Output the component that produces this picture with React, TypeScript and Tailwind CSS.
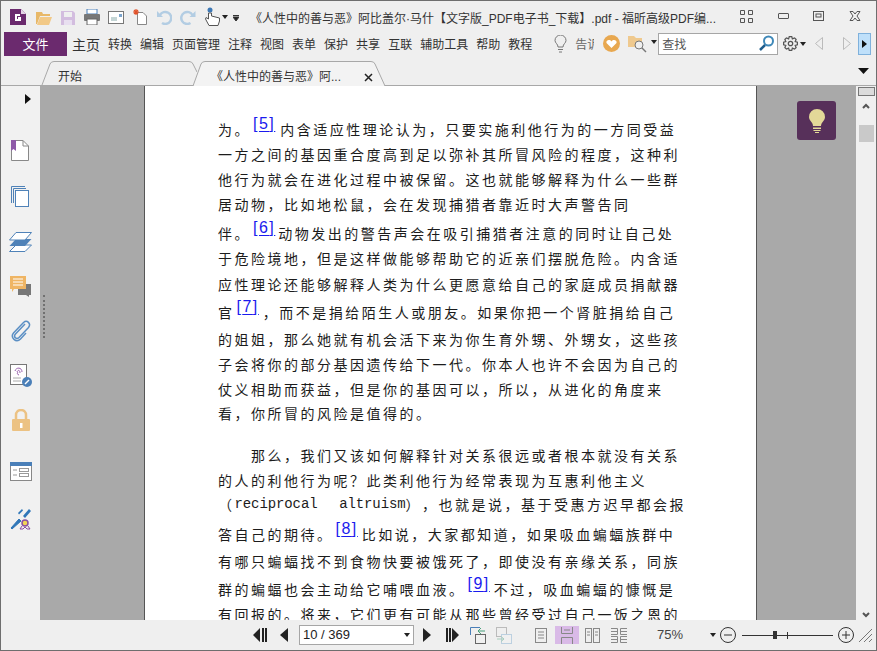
import { ReactNode } from 'react';

const menuItems = ['转换', '编辑', '页面管理', '注释', '视图', '表单', '保护', '共享', '互联', '辅助工具', '帮助', '教程'];

function Ref({ n, className = 'mr-[4px]' }: { n: number; className?: string }) {
  return (
    <a className={`${className} relative -top-[5px] ml-[2px] font-['Liberation_Sans',sans-serif] text-[16px] tracking-[1.5px] text-[#1a1aee] underline underline-offset-2`}>[{n}]</a>
  );
}

function Line({ mt, children }: { mt: string; children: ReactNode }) {
  return <div className={`${mt} flex h-[20px] items-center whitespace-nowrap`}>{children}</div>;
}

function Tri({ dir = 'r', className }: { dir?: 'r' | 'l'; className?: string }) {
  return (
    <svg width="8" height="14" viewBox="0 0 8 14" className={className}>
      <path d={dir === 'r' ? 'M0 0L8 7L0 14Z' : 'M8 0L0 7L8 14Z'} fill="#222" />
    </svg>
  );
}

function Caret({ className }: { className?: string }) {
  return (
    <svg width="6" height="4" viewBox="0 0 6 4" className={className}>
      <path d="M0 0H6L3 4Z" fill="#222" />
    </svg>
  );
}

export default function App() {
  return (
    <div className="flex h-[651px] w-[877px] flex-col overflow-hidden border border-[#6e6e6e] bg-[#efefef] font-['Liberation_Sans','Noto_Sans_CJK_SC',sans-serif] text-[12px] text-[#333]">
      {/* title bar */}
      <div className="flex h-[30px] shrink-0 items-center">
        <svg width="16" height="16" viewBox="0 0 16 16" className="ml-[9px] mt-[2px]">
          <path d="M0 0H11L16 5V16H0Z" fill="#6b2a6e" />
          <path d="M11 0L16 5H11Z" fill="#e4d4e6" />
          <path d="M10 6H6V11H10V9H8" fill="none" stroke="#fff" strokeWidth="2" />
        </svg>
        <svg width="16" height="14" viewBox="0 0 16 14" className="ml-[10px] mt-[3px]">
          <path d="M0 2V1H6L7 3H14V5H4L1 13H0Z" fill="#e8b868" />
          <path d="M4 6H16L13 14H1Z" fill="#f2c987" />
        </svg>
        <svg width="14" height="14" viewBox="0 0 14 14" className="ml-[9px] mt-[3px]">
          <path d="M0 0H12L14 2V14H0Z" fill="#d3bddf" />
          <rect x="3" y="1" width="8" height="5" fill="#efefef" />
          <rect x="3" y="9" width="8" height="5" fill="#e8dff0" />
        </svg>
        <svg width="16" height="16" viewBox="0 0 16 16" className="ml-[9px] mt-[2px]">
          <rect x="3" y="0" width="10" height="5" fill="#fff" stroke="#4a7fb8" />
          <rect x="0" y="5" width="16" height="7" rx="1" fill="#777" />
          <rect x="3" y="10" width="10" height="6" fill="#fff" stroke="#666" />
        </svg>
        <svg width="16" height="13" viewBox="0 0 16 13" className="ml-[8px] mt-[3px]">
          <rect x=".5" y=".5" width="15" height="12" fill="#fff" stroke="#777" />
          <path d="M3 7H9M3 9H9" stroke="#8aa" />
          <rect x="11" y="3" width="3" height="3" fill="#7aa3cc" />
        </svg>
        <svg width="14" height="16" viewBox="0 0 14 16" className="ml-[9px] mt-[2px]">
          <path d="M4.500 3.500H10L13.500 7V15.500H4.500Z" fill="#fff" stroke="#888" />
          <path d="M3 0V6M0 3H6M1 1L5 5M5 1L1 5" stroke="#e0522a" strokeWidth="1.200" />
        </svg>
        <svg width="15" height="15" viewBox="0 0 15 15" fill="none" className="ml-[10px] mt-[3px]">
          <path d="M3 5A6 6 0 1 1 5 13" stroke="#b3cde3" strokeWidth="2.500" />
          <path d="M0 1V7H6Z" fill="#b3cde3" />
        </svg>
        <svg width="16" height="15" viewBox="0 0 15 15" fill="none" className="ml-[8px] mt-[3px]">
          <path d="M12 5A6 6 0 1 0 10 13" stroke="#b3cde3" strokeWidth="2.500" />
          <path d="M15 1V7H9Z" fill="#b3cde3" />
        </svg>
        <svg width="15" height="20" viewBox="0 0 15 20" className="ml-[9px] mt-[2px]">
          <circle cx="5" cy="3" r="2.500" fill="#3d78b5" />
          <path d="M3.500 6V12L1 10.500L0.500 12L4 18.500H13L14.500 14V11L6.500 9V6Z" fill="#fff" stroke="#555" />
        </svg>
        <Caret className="ml-[2px] mt-[2px]" />
        <svg width="6" height="6" viewBox="0 0 6 6" className="ml-[5px] mt-[3px]">
          <path d="M0 .5H6M0 2H6L3 6Z" stroke="#333" fill="#222" strokeWidth="1" />
        </svg>
        <span className="ml-[11px] mt-[6px] w-[466px] whitespace-nowrap text-[12px] text-[#333]">《人性中的善与恶》阿比盖尔·马什【文字版_PDF电子书_下载】.pdf - 福昕高级PDF编...</span>
        <svg width="13" height="13" viewBox="0 0 13 13" fill="none" stroke="#555" className="ml-[24px]">
          <path d="M.5 .5H4.500V4.500H.5ZM8.500 .5H12.500V4.500H8.500ZM.5 8.500H4.500V12.500H.5ZM8.500 8.500H12.500V12.500H8.500Z" />
        </svg>
        <div className="ml-[25px] h-[6px] w-[11px] rounded-[1px] border border-[#555]" />
        <svg width="11" height="10" viewBox="0 0 11 10" fill="none" stroke="#555" className="ml-[24px]">
          <rect x=".5" y=".5" width="10" height="9" />
          <rect x="3" y="3" width="5" height="3" />
        </svg>
        <svg width="12" height="10" viewBox="0 0 12 10" fill="none" stroke="#555" className="ml-[25px]">
          <path d="M1 .5H4L6 3L8 .5H11L8 5L11 9.500H8L6 7L4 9.500H1L4 5Z" />
        </svg>
      </div>

      {/* ribbon */}
      <div className="flex h-[25px] shrink-0 items-center">
        <div className="ml-[3px] flex h-[24px] w-[63px] items-center justify-center bg-[#6b2a6e] pt-[2px] text-[13px] text-white">文件</div>
        <span className="ml-[5px] mt-[3px] text-[14px] text-[#333]">主页</span>
        <div className="ml-[8px] mt-[3px] flex gap-2">
          {menuItems.map((m) => (
            <span key={m}>{m}</span>
          ))}
        </div>
        <svg width="13" height="18" viewBox="0 0 13 18" fill="none" stroke="#777" className="ml-[22px]">
          <path d="M4 12C4 9 1 8 1 5.500A5.500 5.500 0 0 1 12 5.500C12 8 9 9 9 12ZM4 14.500H9M5 17H8" />
        </svg>
        <span className="ml-[8px] mt-[3px] whitespace-nowrap text-[#666]">告</span>
        <span className="mt-[3px] w-[7px] overflow-hidden whitespace-nowrap text-[#666]">诉</span>
        <svg width="17" height="17" viewBox="0 0 17 17" className="ml-[9px]">
          <circle cx="8.500" cy="8.500" r="8.500" fill="#e8a850" />
          <path d="M8.500 13L3.500 8C2.500 5.500 6.500 3.500 8.500 6.500C10.500 3.500 14.500 5.500 13.500 8Z" fill="#fff" />
        </svg>
        <svg width="22" height="18" viewBox="0 0 22 18" className="ml-[8px]">
          <path d="M0 1H6L8 3H14V12H0Z" fill="#efc98e" />
          <circle cx="11" cy="10" r="4" fill="#efefef" stroke="#777" />
          <path d="M14 13L18 17" stroke="#777" strokeWidth="1.500" />
        </svg>
        <Caret className="mb-[4px] ml-[1px]" />
        <div className="ml-[1px] flex h-[22px] w-[120px] items-center justify-between border border-[#a6a6a6] bg-white pl-[3px] pr-[2px] text-[12px] text-[#555]">
          <span className="pt-[2px]">查找</span>
          <svg width="17" height="17" viewBox="0 0 17 17" fill="none">
            <circle cx="10.500" cy="6" r="4.500" stroke="#3f88b8" strokeWidth="2" />
            <path d="M7 10L2 15" stroke="#1d5c8c" strokeWidth="2.500" />
          </svg>
        </div>
        <svg width="15" height="15" viewBox="0 0 24 24" fill="none" stroke="#555" strokeWidth="2" className="ml-[5px]">
          <circle cx="12" cy="12" r="3.500" />
          <path d="M10 1H14L15 4.500L18.500 3L21 5.500L19.500 9L23 10V14L19.500 15L21 18.500L18.500 21L15 19.500L14 23H10L9 19.500L5.500 21L3 18.500L4.500 15L1 14V10L4.500 9L3 5.500L5.500 3L9 4.500Z" />
        </svg>
        <Caret className="ml-[2px]" />
        <svg width="8" height="13" viewBox="0 0 8 13" fill="none" stroke="#bbb" className="ml-[9px]">
          <path d="M7.500 .5V12.500L.5 6.500Z" />
        </svg>
        <svg width="8" height="13" viewBox="0 0 8 13" fill="none" stroke="#bbb" className="ml-[20px]">
          <path d="M.5 .5V12.500L7.500 6.500Z" />
        </svg>
        <div className="ml-[7px] flex h-[22px] w-[13px] items-center justify-center border border-[#7fb1dc] bg-[#bfe0fa]">
          <svg width="5" height="8" viewBox="0 0 5 8"><path d="M0 0L5 4L0 8Z" fill="#111" /></svg>
        </div>
      </div>

      {/* tabs */}
      <div className="relative flex h-[30px] shrink-0 items-end border-b border-[#a8a8a8]">
        <div className="relative ml-[40px] h-[24px] w-[156px]">
          <svg width="156" height="24" viewBox="0 0 156 24" className="absolute left-0 top-0" fill="none" stroke="#a8a8a8">
            <path d="M1 24L9 3Q10 .5 13 .5H148Q151 .5 152 3L156 11" />
          </svg>
          <span className="relative ml-[17px] block pt-[8px] leading-[16px]">开始</span>
        </div>
        <div className="relative -mb-px -ml-[4px] h-[25px] w-[193px]">
          <svg width="193" height="25" viewBox="0 0 193 25" className="absolute left-0 top-0">
            <path d="M0 25L8 3Q9 .5 12 .5H178Q181 .5 182 3L192 25" fill="#f3f3f3" stroke="#a8a8a8" />
          </svg>
          <div className="relative flex items-center pl-[18px] pt-[8px] leading-[16px]">
            <span className="w-[134px] whitespace-nowrap">《人性中的善与恶》阿...</span>
            <svg width="9" height="9" viewBox="0 0 9 9" stroke="#222" strokeWidth="1.500" className="ml-[19px]">
              <path d="M1 1L8 8M8 1L1 8" />
            </svg>
          </div>
        </div>
        <svg width="11" height="6" viewBox="0 0 11 6" className="mb-[11px] ml-[472px]">
          <path d="M0 0H11L5.500 6Z" fill="#111" />
        </svg>
      </div>

      {/* main */}
      <div className="flex min-h-0 flex-1">
        <div className="flex w-[39px] shrink-0 flex-col items-center bg-[#f1f1f1]">
          <svg width="6" height="10" viewBox="0 0 6 10" className="ml-[14px] mt-[8px]"><path d="M0 0L6 5L0 10Z" fill="#111" /></svg>
          {/* bookmarks */}
          <svg width="18" height="21" viewBox="0 0 18 21" className="mr-[1px] mt-[36px]">
            <path d="M.5 .5H12L17.500 6V20.500H.5Z" fill="#fff" stroke="#888" />
            <path d="M12 .5V6H17.500" fill="none" stroke="#888" />
            <path d="M0 0H5V11L2.500 9L0 11Z" fill="#8e5aa8" />
          </svg>
          <svg width="18" height="21" viewBox="0 0 18 21" fill="none" stroke="#4f82b8" className="mr-[1px] mt-[25px]">
            <path d="M.5 17V.5H14M2.500 17V2.500H15" />
            <rect x="4.500" y="4.500" width="13" height="16" fill="#fff" />
          </svg>
          <svg width="23" height="20" viewBox="0 0 23 20" className="mt-[25px]">
            <path d="M.5 19.500L7 13H22.500L16 19.500Z" fill="#fff" stroke="#4f82b8" />
            <path d="M7 7H22.500L16 14H.5Z" fill="#4f82b8" />
            <path d="M7 .5H22.500L16 8H.5Z" fill="#fff" stroke="#4f82b8" />
          </svg>
          <svg width="22" height="22" viewBox="0 0 22 22" className="mt-[24px]">
            <path d="M8 8H21V19H19V21L16 19H8Z" fill="#777" />
            <path d="M0 0H16V13H4L2 16V13H0Z" fill="#efb564" />
            <path d="M3 3H13M3 6H13M3 9H13" stroke="#fff" />
          </svg>
          <svg width="20" height="22" viewBox="0 0 20 22" fill="none" stroke="#5b8fc4" strokeWidth="1.500" className="mt-[22px]">
            <path d="M14 4L4.500 14C2 17 5.500 20 8 17.500L17.500 7.500C20.500 3.500 16 -.500 12.500 2.500L2.500 13C-1 17.500 5 23.500 9.500 19L15 13" />
          </svg>
          <svg width="22" height="23" viewBox="0 0 22 23" className="ml-[1px] mt-[22px]">
            <rect x=".5" y=".5" width="16" height="20" fill="#fff" stroke="#777" />
            <path d="M5 7C6 3 12 3 12 8M7 8C8 5.500 10 6 10 9M9 11C7 10.500 7 9 8 8" fill="none" stroke="#9a62b0" />
            <path d="M3 14H11M3 17H11" stroke="#aaa" />
            <circle cx="17" cy="18" r="5" fill="#4a7fb8" />
            <path d="M15 20L19 16" stroke="#fff" strokeWidth="1.500" />
          </svg>
          <svg width="18" height="22" viewBox="0 0 18 22" className="mt-[22px]">
            <path d="M4 10V6A5 5 0 0 1 14 6V10" fill="none" stroke="#ecc283" strokeWidth="2.500" />
            <rect x="0" y="10" width="18" height="12" rx="1" fill="#ecc283" />
            <path d="M8 14H10.500V19H8Z" fill="#fff" />
          </svg>
          <svg width="22" height="19" viewBox="0 0 22 19" className="mt-[31px]">
            <rect x=".5" y=".5" width="21" height="18" fill="#fff" stroke="#888" />
            <rect x="0" y="0" width="22" height="4" fill="#4a7fb8" />
            <path d="M3 8H7M3 13H7" stroke="#999" />
            <rect x="9.500" y="6.500" width="9" height="3" fill="none" stroke="#999" />
            <rect x="9.500" y="11.500" width="9" height="3" fill="none" stroke="#999" />
          </svg>
          <svg width="21" height="22" viewBox="0 0 21 22" className="mt-[27px]">
            <path d="M1 20L9 11L11 13L2 21Z" fill="#2f76b8" stroke="#2f76b8" />
            <path d="M13 8L19 1L21 3L15 10Z" fill="#2f76b8" />
            <path d="M8 5L12 1L13 2.500L9 6.500Z" fill="#2f76b8" />
            <circle cx="15" cy="15" r="3" fill="#f1d554" stroke="#8a4fa0" strokeWidth="1.500" />
            <path d="M12 18L10 21H13L15 19L17 21H20L18 18" fill="none" stroke="#8a4fa0" />
          </svg>
        </div>

        <div className="relative flex min-w-0 flex-1 overflow-hidden bg-[#a9a9a9]">
          <div className="absolute left-[3px] top-[209px] h-[43px] w-[3px] border-l-2 border-dotted border-[#707070]" />
          <div className="ml-[104px] w-[613px] shrink-0 overflow-hidden border-x border-[#555] bg-white pl-[73px] pt-[33px] font-['Noto_Sans_CJK_SC',sans-serif] text-[14px] tracking-[2.5px] text-[#1c1c1c] [text-spacing-trim:space-all]">
            <Line mt="mt-0">为。<Ref n={5} className="mr-[5px]" />内含适应性理论认为，只要实施利他行为的一方同受益</Line>
            <Line mt="mt-[5px]">一方之间的基因重合度高到足以弥补其所冒风险的程度，这种利</Line>
            <Line mt="mt-[5px]">他行为就会在进化过程中被保留。这也就能够解释为什么一些群</Line>
            <Line mt="mt-[5px]">居动物，比如地松鼠，会在发现捕猎者靠近时大声警告同</Line>
            <Line mt="mt-[9px]">伴。<Ref n={6} className="mr-[3px]" />动物发出的警告声会在吸引捕猎者注意的同时让自己处</Line>
            <Line mt="mt-[5px]">于危险境地，但是这样做能够帮助它的近亲们摆脱危险。内含适</Line>
            <Line mt="mt-[6px]">应性理论还能够解释人类为什么更愿意给自己的家庭成员捐献器</Line>
            <Line mt="mt-[8px]">官<Ref n={7} />，而不是捐给陌生人或朋友。如果你把一个肾脏捐给自己</Line>
            <Line mt="mt-[7px]">的姐姐，那么她就有机会活下来为你生育外甥、外甥女，这些孩</Line>
            <Line mt="mt-[5px]">子会将你的部分基因遗传给下一代。你本人也许不会因为自己的</Line>
            <Line mt="mt-[5px]">仗义相助而获益，但是你的基因可以，所以，从进化的角度来</Line>
            <Line mt="mt-[4px]">看，你所冒的风险是值得的。</Line>
            <Line mt="mt-[22px]"><span className="ml-[33px]">那么，我们又该如何解释针对关系很远或者根本就没有关系</span></Line>
            <Line mt="mt-[5px]">的人的利他行为呢？此类利他行为经常表现为互惠利他主义</Line>
            <Line mt="mt-[4px]">（<span className="whitespace-pre font-['Liberation_Mono',monospace] tracking-[-0.1px]">reciprocal  </span><span className="ml-[5px] font-['Liberation_Mono',monospace] tracking-[-0.1px]">altruism</span>），也就是说，基于受惠方迟早都会报</Line>
            <Line mt="mt-[10px]">答自己的期待。<Ref n={8} />比如说，大家都知道，如果吸血蝙蝠族群中</Line>
            <Line mt="mt-[7px]">有哪只蝙蝠找不到食物快要被饿死了，即使没有亲缘关系，同族</Line>
            <Line mt="mt-[8px]">群的蝙蝠也会主动给它哺喂血液。<Ref n={9} />不过，吸血蝙蝠的慷慨是</Line>
            <Line mt="mt-[5px]">有回报的。将来，它们更有可能从那些曾经受过自己一饭之恩的</Line>
          </div>
          <div className="ml-[40px] mt-[15px] flex h-[39px] w-[39px] shrink-0 items-center justify-center rounded-[3px] bg-[#57305a]">
            <svg width="16" height="24" viewBox="0 0 16 24">
              <path d="M4 17C4 13 0 12 0 8A8 8 0 0 1 16 8C16 12 12 13 12 17Z" fill="#e3d898" />
              <path d="M4 18.500H12V20H4ZM4.500 21H11.500V22H4.500ZM6 23H10V24H6Z" fill="#e3d898" />
            </svg>
          </div>
        </div>

        <div className="flex w-[20px] shrink-0 flex-col items-center bg-[#f0f0f0]">
          <div className="mt-[1px] h-[9px] w-[17px] border border-[#777] bg-[#dcdcdc]" />
          <svg width="8" height="6" viewBox="0 0 8 6" fill="none" stroke="#555" strokeWidth="2" className="mt-[7px]"><path d="M1 5L4 2L7 5" /></svg>
          <div className="mt-[16px] h-[17px] w-[15px] bg-[#c9c9c9]" />
          <svg width="8" height="6" viewBox="0 0 8 6" fill="none" stroke="#555" strokeWidth="2" className="mb-[2px] mt-auto"><path d="M1 1L4 4L7 1" /></svg>
        </div>
      </div>

      {/* status bar */}
      <div className="flex h-[30px] shrink-0 items-center">
        <svg width="14" height="14" viewBox="0 0 14 14" className="ml-[252px]"><path d="M7 0L0 7L7 14ZM9 0H11V14H9ZM12 0H14V14H12Z" fill="#222" /></svg>
        <Tri dir="l" className="ml-[13px]" />
        <div className="ml-[11px] flex h-[20px] w-[115px] items-center justify-between border border-[#a6a6a6] bg-white pl-[3px] pr-[3px] text-[13px] text-[#222]">
          10 / 369
          <Caret />
        </div>
        <Tri className="ml-[9px]" />
        <svg width="13" height="14" viewBox="0 0 13 14" className="ml-[15px]"><path d="M0 0H2V14H0ZM3 0H5V14H3ZM6 0L13 7L6 14Z" fill="#222" /></svg>
        <svg width="16" height="17" viewBox="0 0 16 17" fill="none" className="ml-[11px]">
          <path d="M.5 8V.5H10" stroke="#4a7fb8" />
          <rect x="5.500" y="7.500" width="10" height="9" stroke="#666" fill="#f0f0f0" />
          <path d="M8 4H15M8 4L11 1M8 4L11 7" stroke="#49a07c" />
        </svg>
        <svg width="16" height="17" viewBox="0 0 16 17" fill="none" className="ml-[10px]">
          <rect x=".5" y=".5" width="10" height="9" stroke="#bbb" />
          <rect x="5.500" y="7.500" width="10" height="9" stroke="#bcd0e0" fill="#f0f0f0" />
          <path d="M1 12H8M8 12L5 9.500M8 12L5 14.500" stroke="#a8cdbc" />
        </svg>
        <svg width="12" height="15" viewBox="0 0 12 15" fill="none" stroke="#888" className="ml-[23px]">
          <rect x=".5" y=".5" width="11" height="14" />
          <path d="M3 4H9M3 7H9M3 10H9" />
        </svg>
        <div className="ml-[8px] flex h-[18px] w-[24px] items-center justify-center bg-[#d9bae7]">
          <svg width="12" height="17" viewBox="0 0 12 17" fill="none" stroke="#888">
            <path d="M.5 0V6.500H11.500V0M.5 17V10.500H11.500V17M3 3H9" />
          </svg>
        </div>
        <svg width="15" height="15" viewBox="0 0 15 15" fill="none" stroke="#888" className="ml-[6px]">
          <rect x=".5" y=".5" width="6" height="14" />
          <rect x="8.500" y=".5" width="6" height="14" />
          <path d="M2 4H5M2 7H5M10 4H13M10 7H13" />
        </svg>
        <svg width="16" height="15" viewBox="0 0 16 15" fill="none" stroke="#888" className="ml-[11px]">
          <path d="M0 .5H6.500V6.500H0M16 .5H9.500V6.500H16M0 8.500H6.500V14.500H0M16 8.500H9.500V14.500H16M0 3.500H6.500M9.500 3.500H16M0 11.500H6.500M9.500 11.500H16" />
        </svg>
        <span className="ml-[30px] w-[28px] text-[13px] text-[#444]">75%</span>
        <Caret className="ml-[25px]" />
        <svg width="16" height="16" viewBox="0 0 16 16" fill="none" stroke="#333" className="ml-[4px]">
          <circle cx="8" cy="8" r="7.500" />
          <path d="M4 8H12" />
        </svg>
        <div className="relative ml-[6px] h-px w-[91px] bg-[#333]">
          <div className="absolute -top-[4px] left-[31px] h-[8px] w-[4px] bg-[#333]" />
          <div className="absolute -top-[3px] left-[45px] h-[7px] w-px bg-[#333]" />
        </div>
        <svg width="16" height="16" viewBox="0 0 16 16" fill="none" stroke="#333" className="ml-[5px]">
          <circle cx="8" cy="8" r="7.500" />
          <path d="M4 8H12M8 4V12" />
        </svg>
        <svg width="13" height="13" viewBox="0 0 13 13" fill="none" stroke="#777" className="ml-[5px]">
          <path d="M0 13L13 0M5 13L13 5M10 13L13 10" />
        </svg>
      </div>
    </div>
  );
}
